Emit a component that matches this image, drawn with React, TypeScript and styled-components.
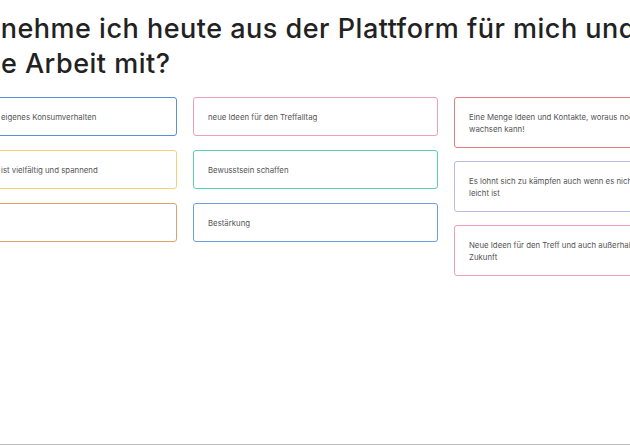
import React from "react";
import styled, { createGlobalStyle } from "styled-components";

const G = createGlobalStyle`
  html,body{margin:0;padding:0;background:#fff;overflow:hidden;}
  body{font-family:"Inter","Noto Sans",sans-serif;}
`;
const Page = styled.div`
  width:630px;height:445px;position:relative;overflow:hidden;
  border-bottom:1px solid #bbb;box-sizing:border-box;
`;
const Inner = styled.div`
  margin-left:-68px;width:800px;padding-top:11px;
`;
const Title = styled.h1`
  margin:0 0 0 4px;font-size:27px;font-weight:500;line-height:35px;color:#222;width:700px;
  letter-spacing:0.5px;
`;
const Grid = styled.div`
  display:flex;gap:16px;margin-top:16px;
`;
const Col = styled.div<{ $gap: number }>`
  width:245px;display:flex;flex-direction:column;gap:${p => p.$gap}px;
`;
const Card = styled.div<{ $c: string; $h: number }>`
  height:${p => p.$h}px;box-sizing:border-box;border:1px solid ${p => p.$c};border-radius:3px;
  padding:0 14px;display:flex;align-items:center;font-size:7.8px;line-height:12px;color:#555;
`;
const Text = styled.span<{ $pl?: number; $w?: number }>`
  padding-left:${p => p.$pl ?? 0}px;width:${p => (p.$w ? p.$w + "px" : "auto")};
`;
const c1 = [["eigenes Konsumverhalten", "#5b8fd6"], ["ist vielfältig und spannend", "#f3d27a"], ["", "#e0a06a"]];
const c2 = [["neue Ideen für den Treffalltag", "#ee9fb8"], ["Bewusstsein schaffen", "#5cd0a8"], ["Bestärkung", "#6a9ee0"]];
const c3 = [["Eine Menge Ideen und Kontakte, woraus noch vieles wachsen kann!", "#e87a82"], ["Es lohnt sich zu kämpfen auch wenn es nicht immer leicht ist", "#b9b9e6"], ["Neue Ideen für den Treff und auch außerhalb, für die Zukunft", "#ee9fb0"]];

export default function App() {
  return (
    <Page>
      <G />
      <Inner>
        <Title>Was nehme ich heute aus der Plattform für mich und meine Arbeit mit?</Title>
        <Grid>
          <Col $gap={14}>{c1.map(([t, c], i) => <Card key={i} $c={c} $h={39}><Text $pl={54}>{t}</Text></Card>)}</Col>
          <Col $gap={14}>{c2.map(([t, c], i) => <Card key={i} $c={c} $h={39}><Text>{t}</Text></Card>)}</Col>
          <Col $gap={13}>{c3.map(([t, c], i) => <Card key={i} $c={c} $h={51}><Text $w={195}>{t}</Text></Card>)}</Col>
        </Grid>
      </Inner>
    </Page>
  );
}
